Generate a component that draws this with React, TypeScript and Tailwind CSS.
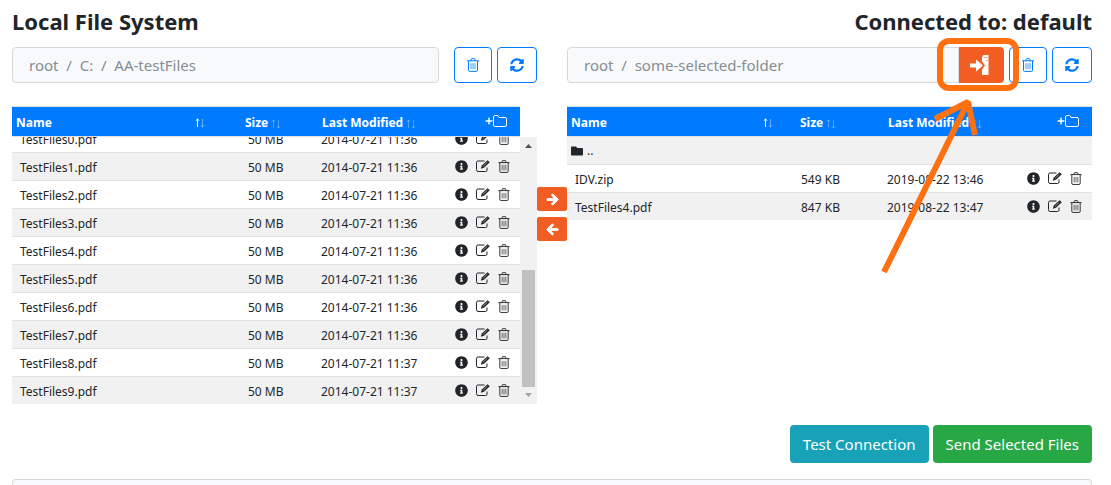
import type { ReactNode } from "react";
import clsx from "clsx";
import { FaArrowLeft, FaArrowRight, FaFolder, FaInfoCircle, FaPlus, FaSyncAlt } from "react-icons/fa";

type FileItem = { name: string; size: string; modified: string };

const localFiles: FileItem[] = Array.from({ length: 10 }, (_, i) => ({
  name: `TestFiles${i}.pdf`,
  size: "50 MB",
  modified: i < 8 ? "2014-07-21 11:36" : "2014-07-21 11:37",
}));

const remoteFiles: FileItem[] = [
  { name: "IDV.zip", size: "549 KB", modified: "2019-08-22 13:46" },
  { name: "TestFiles4.pdf", size: "847 KB", modified: "2019-08-22 13:47" },
];

function TrashIcon({ className }: { className?: string }) {
  return (
    <svg viewBox="0 0 12 14" fill="none" stroke="currentColor" className={className} aria-hidden="true">
      <path d="M0 2.800h12M4 3V1.500Q4 .7 4.800.7h2.400Q8 .7 8 1.500V3M1.500 3v9.200Q1.500 13.400 2.700 13.400h6.600Q10.500 13.400 10.500 12.200V3" />
      <path d="M4 5.200v6M6 5.200v6M8 5.200v6" opacity="0.75" />
    </svg>
  );
}

function EditIcon({ className }: { className?: string }) {
  return (
    <svg viewBox="0 0 14 12" fill="none" className={className} aria-hidden="true">
      <path d="M8.500 1H2Q.5 1 .5 2.500v7Q.5 11.500 2 11.500h7.500Q11 11.500 11 10V7.500" stroke="currentColor" />
      <path d="M4.800 8.700l1-3.200L11.500.2 13.800 2.200 8 7.700z" fill="currentColor" />
      <path d="M6.800 6.500L11.300 2.200" stroke="#fff" strokeWidth="0.5" />
    </svg>
  );
}

function FolderIcon() {
  return (
    <svg viewBox="0 0 14 12" fill="none" stroke="currentColor" className="h-3 w-[14px]" aria-hidden="true">
      <path d="M.5 2Q.5.5 2 .5h2.500Q5.500.5 6 2.500h6Q13.500 2.500 13.500 4v6Q13.500 11.500 12 11.500H2Q.5 11.500.5 10z" />
    </svg>
  );
}

function ConnectIcon() {
  return (
    <svg viewBox="0 0 19 20" className="h-5 w-[19px]" aria-hidden="true">
      <path d="M0 8.500h6V4.500l7 6-7 6v-4H0z" fill="#fff" />
      <path d="M12 2l1.500-2h5v20H12v-5.500l3-4-3-4z" fill="#fff" />
      <path d="M14.500 2h1v1h-1zM16.500 2h1v1h-1zM16.500 5h1v1h-1z" fill="#f15d22" />
    </svg>
  );
}

function SortIcon({ active }: { active?: boolean }) {
  return (
    <svg viewBox="0 0 10 10" fill="none" stroke="#fff" className="inline-block size-[10px] align-[-2px]" aria-hidden="true">
      <path d="M2.500 9V.8M.8 2.700L2.500 1l1.700 1.700" opacity={active ? 1 : 0.3} />
      <path d="M7.500 1v8.200M5.800 7.300L7.500 9l1.700-1.700" opacity={active ? 0.4 : 0.3} />
    </svg>
  );
}

function ToolButton({ label, className, children }: { label: string; className: string; children: ReactNode }) {
  return (
    <button
      type="button"
      aria-label={label}
      className={clsx(
        "flex h-9 items-center justify-center rounded border border-[#007bff] bg-white text-[#007bff]",
        className
      )}
    >
      {children}
    </button>
  );
}

function PathBar({ parts, children }: { parts: string[]; children?: ReactNode }) {
  return (
    <div className="flex h-9">
      <nav
        aria-label="Path"
        className={clsx(
          "flex flex-1 items-center border border-[#d6d9dc] bg-[#f8f9fa] pl-4 text-[15px] text-[#868e96]",
          children ? "rounded-l" : "mr-[10px] rounded"
        )}
      >
        {parts.map((part, i) => (
          <span key={part} className="whitespace-pre">
            {i > 0 && "  /  "}
            {part}
          </span>
        ))}
      </nav>
      {children}
      <div className="ml-[5px] flex gap-[5px]">
        <ToolButton label="Delete" className="w-[38px]">
          <TrashIcon className="h-[14px] w-3" />
        </ToolButton>
        <ToolButton label="Refresh" className="w-10">
          <FaSyncAlt className="size-[14px]" />
        </ToolButton>
      </div>
    </div>
  );
}

function Columns({ wide }: { wide?: boolean }) {
  return (
    <colgroup>
      <col />
      <col className={wide ? "w-[88px]" : "w-[77px]"} />
      <col className={wide ? "w-[138px]" : "w-[132px]"} />
      <col className="w-[70px]" />
    </colgroup>
  );
}

function HeaderTable({ wide }: { wide?: boolean }) {
  return (
    <table className="w-full table-fixed border-y border-[#dee2e6] text-left text-[12px]">
      <Columns wide={wide} />
      <thead className="bg-[#007bff] text-white">
        <tr className="h-[30px]">
          <th className="pt-[2px] pl-1">
            <div className={clsx("flex items-center justify-between", wide ? "pr-[23px]" : "pr-9")}>
              Name <SortIcon active />
            </div>
          </th>
          <th className="pt-[2px] pl-1 whitespace-nowrap">
            Size <SortIcon />
          </th>
          <th className="pt-[2px] pl-1 whitespace-nowrap">
            Last Modified <SortIcon />
          </th>
          <th>
            <button type="button" aria-label="New folder" className="mr-[13px] mb-[2px] ml-auto flex items-center">
              <FaPlus className="size-2" />
              <FolderIcon />
            </button>
          </th>
        </tr>
      </thead>
    </table>
  );
}

function FileRow({ file, wide }: { file: FileItem; wide?: boolean }) {
  return (
    <tr className="h-7 border-t border-[#dee2e6] odd:bg-[#f1f1f1]">
      <td className="pt-1 pl-2">{file.name}</td>
      <td className={clsx("pt-1", wide ? "pl-[5px]" : "pl-[7px]")}>{file.size}</td>
      <td className="pt-1 pl-[3px] whitespace-nowrap">{file.modified}</td>
      <td>
        <div className="flex items-center gap-2 pl-[5px]">
          <button type="button" aria-label={`Info ${file.name}`}>
            <FaInfoCircle className="size-[13px]" />
          </button>
          <button type="button" aria-label={`Rename ${file.name}`}>
            <EditIcon className="h-3 w-[14px]" />
          </button>
          <button type="button" aria-label={`Delete ${file.name}`}>
            <TrashIcon className="h-[13px] w-3" />
          </button>
        </div>
      </td>
    </tr>
  );
}

function ScrollBar() {
  return (
    <div className="flex w-[17px] flex-col items-center justify-end bg-[#f1f1f1]" aria-hidden="true">
      <svg viewBox="0 0 7 4" className="mt-[7px] mb-auto h-1 w-[7px]">
        <path d="M0 4L3.500 0 7 4z" fill="#505050" />
      </svg>
      <div className="h-[117px] w-[13px] bg-[#c1c1c1]" />
      <svg viewBox="0 0 7 4" className="mt-[6px] mb-[7px] h-1 w-[7px]">
        <path d="M0 0L3.500 4 7 0z" fill="#a3a3a3" />
      </svg>
    </div>
  );
}

function TransferButton({ label, children }: { label: string; children: ReactNode }) {
  return (
    <button
      type="button"
      aria-label={label}
      className="flex h-6 items-center justify-center rounded-xs bg-[#f15d22] text-[13px] text-white"
    >
      {children}
    </button>
  );
}

// Hand-drawn highlight pointing at the connect button
function Highlight() {
  return (
    <svg
      viewBox="0 0 215 250"
      fill="none"
      stroke="#ff7110"
      strokeWidth="6"
      className="pointer-events-none absolute top-8 right-[19px] h-[250px] w-[215px]"
      aria-hidden="true"
    >
      <rect x="63" y="9" width="76" height="47" rx="9" />
      <path d="M7 240L91 70M58 87L91 70L98 103" strokeLinejoin="bevel" />
    </svg>
  );
}

export default function App() {
  return (
    <div className="relative flex min-h-screen flex-col bg-white pr-[19px] pl-3 font-['Noto_Sans','Open_Sans',sans-serif] text-[#212529]">
      <div className="flex">
        <section className="min-w-0 flex-1">
          <h1 className="mt-[5px] mb-[10px] text-[22px] leading-8 font-bold">Local File System</h1>
          <PathBar parts={["root", "C:", "AA-testFiles"]} />
          <div className="mt-[23px] pr-[17px]">
            <HeaderTable />
          </div>
          <div className="flex h-[267px]">
            <div className="flex flex-1 flex-col justify-end overflow-hidden">
              <table className="w-full table-fixed text-left text-[12px]">
                <Columns />
                <tbody>
                  <tr className="h-7" />
                  {localFiles.map((file) => (
                    <FileRow key={file.name} file={file} />
                  ))}
                </tbody>
              </table>
            </div>
            <ScrollBar />
          </div>
        </section>

        <div className="mt-[187px] flex w-[30px] flex-col gap-[6px]">
          <TransferButton label="Send to remote">
            <FaArrowRight className="overflow-visible stroke-current stroke-[36px]" />
          </TransferButton>
          <TransferButton label="Send to local">
            <FaArrowLeft className="overflow-visible stroke-current stroke-[36px]" />
          </TransferButton>
        </div>

        <section className="min-w-0 flex-1">
          <h1 className="mt-[5px] mb-[10px] text-right text-[22px] leading-8 font-bold">Connected to: default</h1>
          <PathBar parts={["root", "some-selected-folder"]}>
            <button
              type="button"
              aria-label="Connect"
              className="flex w-[45px] items-center rounded-r bg-[#f15d22] pl-[11px]"
            >
              <ConnectIcon />
            </button>
          </PathBar>
          <div className="mt-[23px]">
            <HeaderTable wide />
            <table className="w-full table-fixed text-left text-[12px]">
              <Columns wide />
              <tbody>
                <tr className="h-[27px] bg-[#f1f1f1]">
                  <td colSpan={4} className="pt-[2px] pl-1">
                    <a href="#up" className="flex items-center gap-1">
                      <FaFolder className="size-3" /> ..
                    </a>
                  </td>
                </tr>
                {remoteFiles.map((file) => (
                  <FileRow key={file.name} file={file} wide />
                ))}
              </tbody>
            </table>
          </div>
        </section>
      </div>

      <div className="mt-[21px] flex justify-end gap-1 text-[15px] text-white">
        <button type="button" className="h-[38px] rounded bg-[#17a2b8] px-[13px]">
          Test Connection
        </button>
        <button type="button" className="h-[38px] rounded bg-[#28a745] px-[13px]">
          Send Selected Files
        </button>
      </div>

      <div className="mt-4 flex-1 rounded-t border border-b-0 border-[#d6d9dc] bg-[#f8f9fa]" />

      <Highlight />
    </div>
  );
}
